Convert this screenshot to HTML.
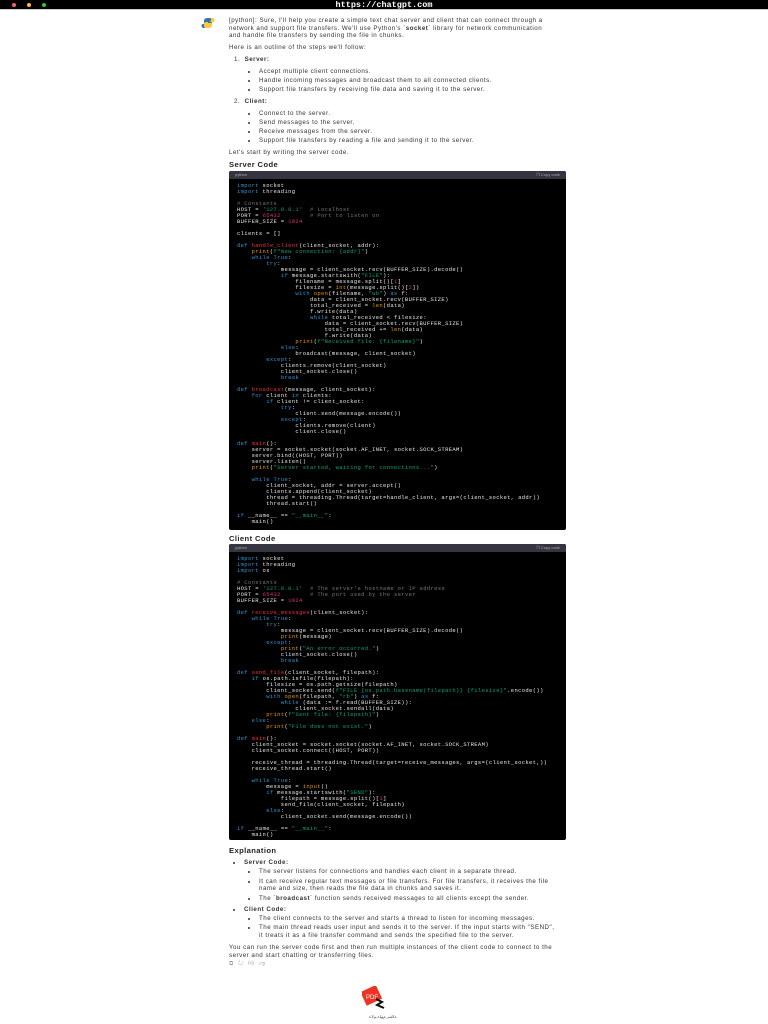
<!DOCTYPE html>
<html><head><meta charset="utf-8"><style>
*{margin:0;padding:0;box-sizing:border-box}
body{width:768px;height:1024px;background:#fff;position:relative;overflow:hidden;font-family:"Liberation Sans",sans-serif;color:#222}
.bar{position:absolute;left:0;top:0;width:768px;height:10px;background:#000;border-bottom:1px solid #ccc}
.dot{position:absolute;top:3px;width:4px;height:4px;border-radius:50%}
.url{position:absolute;top:0;left:0;width:768px;text-align:center;color:#fff;font-weight:bold;font-size:8.5px;line-height:10px;font-family:"Liberation Mono",monospace}
.t{position:absolute;left:229px;font-size:6.2px;letter-spacing:0.5px;line-height:7.6px;color:#333;white-space:nowrap}
.b{position:absolute;font-size:6.2px;letter-spacing:0.5px;line-height:7.6px;color:#333;white-space:nowrap}
.b::before{content:"";position:absolute;left:-11px;top:3px;width:2px;height:2px;background:#333;border-radius:50%}
.h{position:absolute;left:229px;font-size:7.6px;letter-spacing:0.4px;font-weight:bold;color:#222}
.code{position:absolute;left:229px;width:337px;background:#000;border-radius:2px;overflow:hidden}
.ch{height:8px;background:#343541;color:#aaa;font-size:4px;line-height:8px;padding:0 6px;position:relative}
.ch span{position:absolute;right:6px}
pre{font-family:"Liberation Mono",monospace;font-size:5.5px;letter-spacing:0.35px;line-height:6px;color:#e6e6e6;padding:4px 8px}
.k{color:#2e95d3}.s{color:#00a67d}.n{color:#df3079}.f{color:#f22c3d}.p{color:#e9950c}.c{color:#777}
</style></head><body>
<div class="bar"><div class="dot" style="left:12px;background:#ff5f57"></div><div class="dot" style="left:27px;background:#febc2e"></div><div class="dot" style="left:42px;background:#28c840"></div><div class="url">https://chatgpt.com</div></div>
<svg style="position:absolute;left:201px;top:17px" width="14" height="12" viewBox="0 0 14 12"><path d="M7 1C3 1 3 3 3 4v2h4v1H2C0 7 0 10 2 11h2V9c0-1 1-2 2-2h3c1 0 2-1 2-2V3C11 1 9 1 7 1z" fill="#3872a6"/><path d="M7 11c4 0 4-2 4-3V6H7V5h5c2 0 2-3 0-4h-2v2c0 1-1 2-2 2H5C4 5 3 6 3 7v2c0 2 2 2 4 2z" fill="#f7c93c"/></svg>
<div class="t" style="top:17px">[python]: Sure, I'll help you create a simple text chat server and client that can connect through a</div>
<div class="t" style="top:24.5px">network and support file transfers. We'll use Python's `<b>socket</b>` library for network communication</div>
<div class="t" style="top:32px">and handle file transfers by sending the file in chunks.</div>
<div class="t" style="top:44px">Here is an outline of the steps we'll follow:</div>
<div class="t" style="top:56px;left:234px">1. &nbsp;<b>Server:</b></div>
<div class="b" style="top:68px;left:259px">Accept multiple client connections.</div>
<div class="b" style="top:77px;left:259px">Handle incoming messages and broadcast them to all connected clients.</div>
<div class="b" style="top:86px;left:259px">Support file transfers by receiving file data and saving it to the server.</div>
<div class="t" style="top:98px;left:234px">2. &nbsp;<b>Client:</b></div>
<div class="b" style="top:110px;left:259px">Connect to the server.</div>
<div class="b" style="top:119px;left:259px">Send messages to the server.</div>
<div class="b" style="top:128px;left:259px">Receive messages from the server.</div>
<div class="b" style="top:137px;left:259px">Support file transfers by reading a file and sending it to the server.</div>
<div class="t" style="top:149px">Let's start by writing the server code.</div>
<div class="h" style="top:160px">Server Code</div>
<div class="code" style="top:171px;height:359px"><div class="ch">python<span>❐ Copy code</span></div>
<pre><span class="k">import</span> socket
<span class="k">import</span> threading

<span class="c"># Constants</span>
HOST = <span class="s">'127.0.0.1'</span>  <span class="c"># Localhost</span>
PORT = <span class="n">65432</span>        <span class="c"># Port to listen on</span>
BUFFER_SIZE = <span class="n">1024</span>

clients = []

<span class="k">def</span> <span class="f">handle_client</span>(client_socket, addr):
    <span class="p">print</span>(<span class="s">f"New connection: {addr}"</span>)
    <span class="k">while</span> <span class="k">True</span>:
        <span class="k">try</span>:
            message = client_socket.recv(BUFFER_SIZE).decode()
            <span class="k">if</span> message.startswith(<span class="s">"FILE"</span>):
                filename = message.split()[<span class="n">1</span>]
                filesize = <span class="p">int</span>(message.split()[<span class="n">2</span>])
                <span class="k">with</span> <span class="p">open</span>(filename, <span class="s">"wb"</span>) <span class="k">as</span> f:
                    data = client_socket.recv(BUFFER_SIZE)
                    total_received = <span class="p">len</span>(data)
                    f.write(data)
                    <span class="k">while</span> total_received &lt; filesize:
                        data = client_socket.recv(BUFFER_SIZE)
                        total_received += <span class="p">len</span>(data)
                        f.write(data)
                <span class="p">print</span>(<span class="s">f"Received file: {filename}"</span>)
            <span class="k">else</span>:
                broadcast(message, client_socket)
        <span class="k">except</span>:
            clients.remove(client_socket)
            client_socket.close()
            <span class="k">break</span>

<span class="k">def</span> <span class="f">broadcast</span>(message, client_socket):
    <span class="k">for</span> client <span class="k">in</span> clients:
        <span class="k">if</span> client != client_socket:
            <span class="k">try</span>:
                client.send(message.encode())
            <span class="k">except</span>:
                clients.remove(client)
                client.close()

<span class="k">def</span> <span class="f">main</span>():
    server = socket.socket(socket.AF_INET, socket.SOCK_STREAM)
    server.bind((HOST, PORT))
    server.listen()
    <span class="p">print</span>(<span class="s">"Server started, waiting for connections..."</span>)

    <span class="k">while</span> <span class="k">True</span>:
        client_socket, addr = server.accept()
        clients.append(client_socket)
        thread = threading.Thread(target=handle_client, args=(client_socket, addr))
        thread.start()

<span class="k">if</span> __name__ == <span class="s">"__main__"</span>:
    main()</pre></div>
<div class="h" style="top:534px">Client Code</div>
<div class="code" style="top:544px;height:296px"><div class="ch">python<span>❐ Copy code</span></div>
<pre><span class="k">import</span> socket
<span class="k">import</span> threading
<span class="k">import</span> os

<span class="c"># Constants</span>
HOST = <span class="s">'127.0.0.1'</span>  <span class="c"># The server's hostname or IP address</span>
PORT = <span class="n">65432</span>        <span class="c"># The port used by the server</span>
BUFFER_SIZE = <span class="n">1024</span>

<span class="k">def</span> <span class="f">receive_messages</span>(client_socket):
    <span class="k">while</span> <span class="k">True</span>:
        <span class="k">try</span>:
            message = client_socket.recv(BUFFER_SIZE).decode()
            <span class="p">print</span>(message)
        <span class="k">except</span>:
            <span class="p">print</span>(<span class="s">"An error occurred."</span>)
            client_socket.close()
            <span class="k">break</span>

<span class="k">def</span> <span class="f">send_file</span>(client_socket, filepath):
    <span class="k">if</span> os.path.isfile(filepath):
        filesize = os.path.getsize(filepath)
        client_socket.send(<span class="s">f"FILE {os.path.basename(filepath)} {filesize}"</span>.encode())
        <span class="k">with</span> <span class="p">open</span>(filepath, <span class="s">"rb"</span>) <span class="k">as</span> f:
            <span class="k">while</span> (data := f.read(BUFFER_SIZE)):
                client_socket.sendall(data)
        <span class="p">print</span>(<span class="s">f"Sent file: {filepath}"</span>)
    <span class="k">else</span>:
        <span class="p">print</span>(<span class="s">"File does not exist."</span>)

<span class="k">def</span> <span class="f">main</span>():
    client_socket = socket.socket(socket.AF_INET, socket.SOCK_STREAM)
    client_socket.connect((HOST, PORT))

    receive_thread = threading.Thread(target=receive_messages, args=(client_socket,))
    receive_thread.start()

    <span class="k">while</span> <span class="k">True</span>:
        message = <span class="p">input</span>()
        <span class="k">if</span> message.startswith(<span class="s">"SEND"</span>):
            filepath = message.split()[<span class="n">1</span>]
            send_file(client_socket, filepath)
        <span class="k">else</span>:
            client_socket.send(message.encode())

<span class="k">if</span> __name__ == <span class="s">"__main__"</span>:
    main()</pre></div>
<div class="h" style="top:846px">Explanation</div>
<div class="b" style="top:859px;left:244px"><b>Server Code:</b></div>
<div class="b" style="top:868px;left:259px">The server listens for connections and handles each client in a separate thread.</div>
<div class="b" style="top:878px;left:259px">It can receive regular text messages or file transfers. For file transfers, it receives the file</div>
<div class="t" style="top:885px;left:259px">name and size, then reads the file data in chunks and saves it.</div>
<div class="b" style="top:895px;left:259px">The `<b>broadcast</b>` function sends received messages to all clients except the sender.</div>
<div class="b" style="top:906px;left:244px"><b>Client Code:</b></div>
<div class="b" style="top:915px;left:259px">The client connects to the server and starts a thread to listen for incoming messages.</div>
<div class="b" style="top:924px;left:259px">The main thread reads user input and sends it to the server. If the input starts with "SEND",</div>
<div class="t" style="top:931.5px;left:259px">it treats it as a file transfer command and sends the specified file to the server.</div>
<div class="t" style="top:944px">You can run the server code first and then run multiple instances of the client code to connect to the</div>
<div class="t" style="top:951.5px">server and start chatting or transferring files.</div>
<div class="t" style="top:961px;color:#999;font-size:6px">⧉ &nbsp;↻ &nbsp;👍︎ &nbsp;👎︎</div>
<svg style="position:absolute;left:362px;top:986px" width="30" height="26" viewBox="0 0 30 26"><rect x="1" y="2" width="17" height="15" fill="#e32" transform="rotate(-25 9 10)"/><text x="4" y="13" font-size="6" fill="#fff" font-family="Liberation Sans">PDF</text><path d="M14 13l6 3-5 3 7 3" stroke="#111" stroke-width="2" fill="none"/></svg>
<div class="t" style="top:1014px;left:369px;font-size:4px;line-height:5px;letter-spacing:0;color:#444">ﻪﻟﺎﻘﻣ_ﻡﻮﻠﻋ.ﻢﻟﺎﻋ</div>
</body></html>
